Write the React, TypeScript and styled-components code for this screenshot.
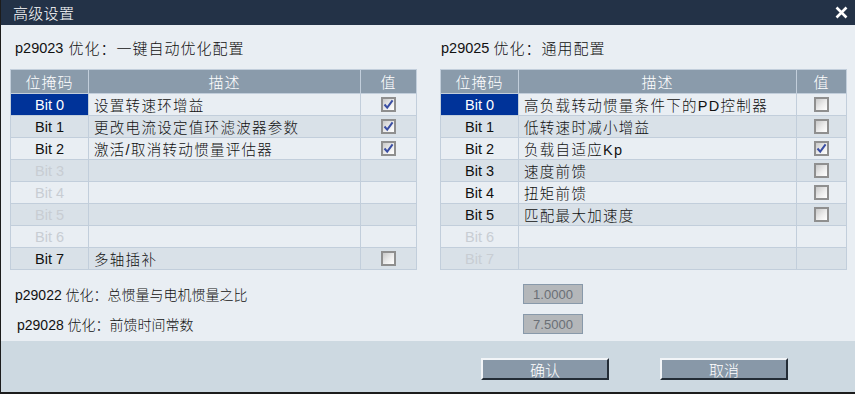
import React from 'react'
import styled, { createGlobalStyle } from 'styled-components'

const GlobalStyle = createGlobalStyle`
  html, body {
    margin: 0;
    padding: 0;
    background: #ffffff;
  }
  * {
    box-sizing: border-box;
  }
`

const FONT = `"Liberation Sans", "Noto Sans CJK SC", sans-serif`

const Window = styled.div`
  width: 855px;
  height: 394px;
  display: flex;
  flex-direction: column;
  border-left: 1px solid #1c1c1c;
  border-bottom: 2px solid #1c1c1c;
  font-family: ${FONT};
  font-weight: 300;
  overflow: hidden;
`

const TitleBar = styled.div`
  height: 25px;
  flex: none;
  background: #233247;
  color: #ffffff;
  display: flex;
  align-items: center;
  justify-content: space-between;
  padding: 0 6px 0 12px;
  font-size: 15px;
  letter-spacing: 0.3px;
`

const CloseButton = styled.div`
  width: 16px;
  height: 16px;
  display: flex;
  align-items: center;
  justify-content: center;
`

const Content = styled.div`
  flex: 1;
  background: #e9eef3;
  padding: 0 0 0 9px;
  display: flex;
  flex-direction: column;
`

const Columns = styled.div`
  display: grid;
  grid-template-columns: 407px 407px;
  column-gap: 23px;
`

const Panel = styled.div`
  display: flex;
  flex-direction: column;
`

const PanelHeading = styled.div<{ $indent: number }>`
  height: 44px;
  display: flex;
  align-items: center;
  padding-left: ${(p) => p.$indent}px;
  padding-top: 1px;
  color: #111;
  font-size: 15px;
  letter-spacing: 1px;
  white-space: nowrap;
`

const Code = styled.span<{ $gap: number }>`
  font-size: 14.5px;
  letter-spacing: 0;
  margin-right: ${(p) => p.$gap}px;
`

const Grid = styled.div`
  border-top: 1px solid #c2cedb;
  border-left: 1px solid #c2cedb;
`

const Row = styled.div<{ $cols: string; $alt?: boolean; $head?: boolean }>`
  display: grid;
  grid-template-columns: ${(p) => p.$cols};
  height: ${(p) => (p.$head ? 24 : 22)}px;
  background: ${(p) => (p.$head ? '#8a9bab' : p.$alt ? '#d9e1e8' : '#e9eef3')};
`

const Cell = styled.div<{ $align?: 'left' | 'center'; $selected?: boolean; $muted?: boolean; $head?: boolean }>`
  border-right: 1px solid #c2cedb;
  border-bottom: 1px solid #c2cedb;
  display: flex;
  align-items: center;
  justify-content: ${(p) => (p.$align === 'left' ? 'flex-start' : 'center')};
  padding-left: ${(p) => (p.$align === 'left' ? 5 : 0)}px;
  background: ${(p) => (p.$selected ? '#003399' : 'transparent')};
  color: ${(p) => (p.$selected || p.$head ? '#ffffff' : p.$muted ? '#c8cdd3' : '#111111')};
  font-size: ${(p) => (p.$head ? 15 : 14.5)}px;
  letter-spacing: ${(p) => (p.$align === 'left' ? 1.3 : p.$head ? 1 : 0)}px;
  white-space: nowrap;
  overflow: hidden;
`

const Box = styled.div`
  width: 15px;
  height: 15px;
  border: 2px solid #8f8f8f;
  background: linear-gradient(135deg, #c9c9c9 0%, #ececec 55%, #ffffff 100%);
  display: flex;
  align-items: center;
  justify-content: center;
`

const Form = styled.div`
  margin-top: 14px;
  display: flex;
  flex-direction: column;
  gap: 10px;
`

const FormRow = styled.div<{ $indent: number }>`
  display: grid;
  grid-template-columns: ${(p) => 513 - p.$indent}px 60px;
  padding-left: ${(p) => p.$indent}px;
  align-items: center;
  height: 20px;
`

const Label = styled.div`
  font-size: 14px;
  color: #111;
  white-space: nowrap;
`

const ValueBox = styled.div`
  height: 20px;
  border: 1px solid #8899aa;
  background: #b4b7ba;
  color: #6a6f76;
  font-size: 13px;
  display: flex;
  align-items: center;
  justify-content: center;
`

const Footer = styled.div`
  height: 51px;
  flex: none;
  background: #cdd9e1;
  display: flex;
  align-items: center;
  padding-left: 480px;
  gap: 51px;
`

const Button = styled.div`
  width: 128px;
  height: 22px;
  margin-top: 5px;
  background: #8898a8;
  border-top: 2px solid #f2f5f8;
  border-left: 2px solid #f2f5f8;
  border-right: 2px solid #232c36;
  border-bottom: 2px solid #232c36;
  color: #ffffff;
  font-size: 15px;
  display: flex;
  align-items: center;
  justify-content: center;
`

type Bit = { label: string; desc?: string; checked?: boolean; enabled: boolean }

const leftBits: Bit[] = [
  { label: 'Bit 0', desc: '设置转速环增益', checked: true, enabled: true },
  { label: 'Bit 1', desc: '更改电流设定值环滤波器参数', checked: true, enabled: true },
  { label: 'Bit 2', desc: '激活/取消转动惯量评估器', checked: true, enabled: true },
  { label: 'Bit 3', enabled: false },
  { label: 'Bit 4', enabled: false },
  { label: 'Bit 5', enabled: false },
  { label: 'Bit 6', enabled: false },
  { label: 'Bit 7', desc: '多轴插补', checked: false, enabled: true },
]

const rightBits: Bit[] = [
  { label: 'Bit 0', desc: '高负载转动惯量条件下的PD控制器', checked: false, enabled: true },
  { label: 'Bit 1', desc: '低转速时减小增益', checked: false, enabled: true },
  { label: 'Bit 2', desc: '负载自适应Kp', checked: true, enabled: true },
  { label: 'Bit 3', desc: '速度前馈', checked: false, enabled: true },
  { label: 'Bit 4', desc: '扭矩前馈', checked: false, enabled: true },
  { label: 'Bit 5', desc: '匹配最大加速度', checked: false, enabled: true },
  { label: 'Bit 6', enabled: false },
  { label: 'Bit 7', enabled: false },
]

function Checkbox({ checked }: { checked?: boolean }) {
  return (
    <Box>
      {checked && (
        <svg width="11" height="11" viewBox="0 0 11 11">
          <path d="M1.5 5.5 L4.2 8.6 L9.6 1.4" fill="none" stroke="#3a4ea3" strokeWidth="2" />
        </svg>
      )}
    </Box>
  )
}

function BitTable({ bits, cols }: { bits: Bit[]; cols: string }) {
  return (
    <Grid>
      <Row $cols={cols} $head>
        <Cell $head>位掩码</Cell>
        <Cell $head>描述</Cell>
        <Cell $head>值</Cell>
      </Row>
      {bits.map((b, i) => (
        <Row key={b.label} $cols={cols} $alt={i % 2 === 1}>
          <Cell $selected={i === 0} $muted={!b.enabled}>
            {b.label}
          </Cell>
          <Cell $align="left">{b.desc}</Cell>
          <Cell>{b.enabled && <Checkbox checked={b.checked} />}</Cell>
        </Row>
      ))}
    </Grid>
  )
}

export default function App() {
  return (
    <>
      <GlobalStyle />
      <Window>
        <TitleBar>
          <span>高级设置</span>
          <CloseButton>
            <svg width="13" height="13" viewBox="0 0 13 13">
              <path d="M1.5 1.5 L11.5 11.5 M11.5 1.5 L1.5 11.5" stroke="#ffffff" strokeWidth="2.6" />
            </svg>
          </CloseButton>
        </TitleBar>
        <Content>
          <Columns>
            <Panel>
              <PanelHeading $indent={5}>
                <Code $gap={5}>p29023</Code>优化：一键自动优化配置
              </PanelHeading>
              <BitTable bits={leftBits} cols="78px 272px 1fr" />
            </Panel>
            <Panel>
              <PanelHeading $indent={1}>
                <Code $gap={4}>p29025</Code>优化：通用配置
              </PanelHeading>
              <BitTable bits={rightBits} cols="78px 278px 1fr" />
            </Panel>
          </Columns>
          <Form>
            <FormRow $indent={5}>
              <Label>p29022 优化：总惯量与电机惯量之比</Label>
              <ValueBox>1.0000</ValueBox>
            </FormRow>
            <FormRow $indent={7}>
              <Label>p29028 优化：前馈时间常数</Label>
              <ValueBox>7.5000</ValueBox>
            </FormRow>
          </Form>
        </Content>
        <Footer>
          <Button>确认</Button>
          <Button>取消</Button>
        </Footer>
      </Window>
    </>
  )
}
